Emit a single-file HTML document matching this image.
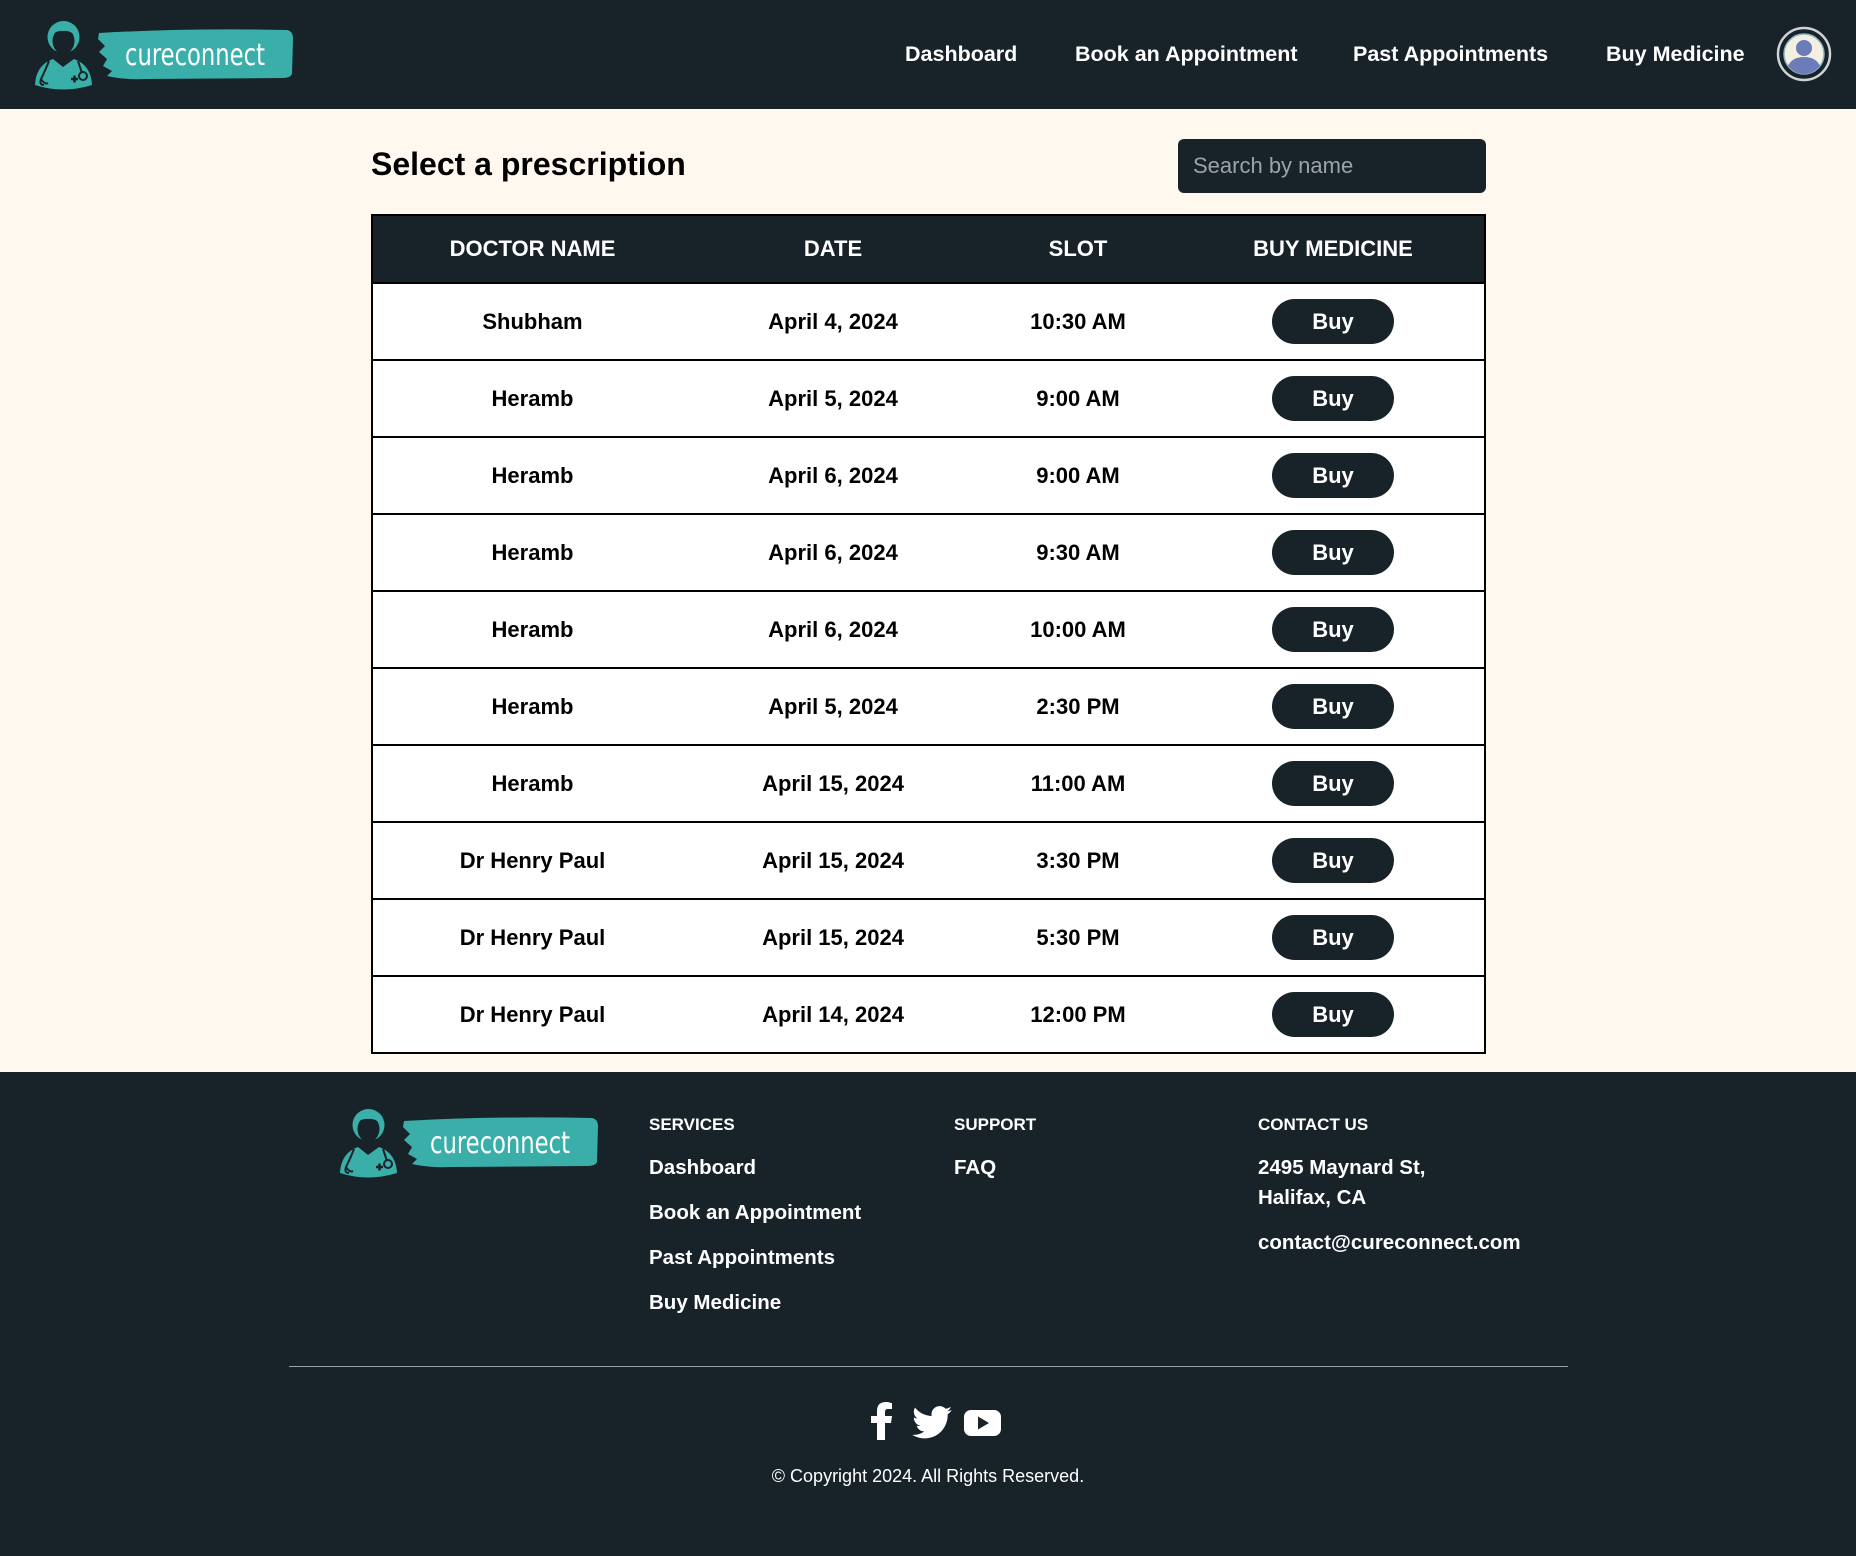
<!DOCTYPE html>
<html><head><meta charset="utf-8">
<style>
*{margin:0;padding:0;box-sizing:border-box}
body{width:1856px;height:1556px;background:#fff8ef;font-family:"Liberation Sans",sans-serif;position:relative;overflow:hidden}
.hdr{position:absolute;left:0;top:0;width:1856px;height:109px;background:#182329}
.nav a{position:absolute;top:42px;color:#fff;font-weight:bold;font-size:21.5px;text-decoration:none;white-space:nowrap}
.title{position:absolute;left:371px;top:146px;font-size:32px;font-weight:bold;color:#000}
.search{position:absolute;left:1178px;top:139px;width:308px;height:54px;background:#182329;border-radius:6px;color:#9aa3a8;font-size:22px;padding:14px 0 0 15px}
table{position:absolute;left:371px;top:214px;width:1115px;border-collapse:collapse;border:2px solid #000}
th{background:#182329;color:#fff;height:68px;font-size:22px;font-weight:bold;text-align:center}
td{height:77px;border-top:2px solid #000;background:#fff;text-align:center;font-size:22px;font-weight:bold;color:#000}
.buy{display:inline-block;width:122px;height:45px;border-radius:23px;background:#182329;color:#fff;font-weight:bold;font-size:22px;line-height:45px}
.ftr{position:absolute;left:0;top:1072px;width:1856px;height:484px;background:#182329;color:#fff}
.ftr .h{position:absolute;font-size:17px;font-weight:bold}
.ftr .l{position:absolute;font-size:20.5px;font-weight:bold;white-space:nowrap}
.hr{position:absolute;left:289px;top:294px;width:1279px;height:1px;background:#9aa0a4}
.copy{position:absolute;left:0;width:1856px;text-align:center;top:394px;font-size:18px}
</style></head><body>
<svg width="0" height="0" style="position:absolute">
<defs>
<g id="logo">
<path d="M0 66 Q1 46 18 40 L28 48 L39 40 Q56 46 57 66 Q28 75 0 66Z" fill="#3aafa9"/>
<circle cx="28.5" cy="18" r="16" fill="#3aafa9"/>
<ellipse cx="28.5" cy="22" rx="11" ry="13" fill="#182329"/>
<path d="M17 16 Q18 6 28.5 6 Q39 6 40 16 Q34 11 28.5 12 Q22 11 17 16Z" fill="#3aafa9"/>
<path d="M14 42 Q10 52 6 60 M43 42 L47 54" stroke="#182329" stroke-width="2" fill="none"/>
<path d="M6 60 Q4 66 9 66 M6 60 Q10 66 13 64" stroke="#182329" stroke-width="2" fill="none"/>
<circle cx="48" cy="57" r="4" stroke="#182329" stroke-width="2" fill="none"/>
<path d="M36 60 h7 M39.5 56.5 v7" stroke="#182329" stroke-width="2.5"/>
<path d="M64 14 Q150 9 252 11 Q258 12 258 20 L257 55 Q255 59 248 59 L110 60 Q90 61 72 57 L77 52 L68 47 L72 40 L64 33 L70 27 L63 20Z" fill="#3aafa9"/>
<text x="90" y="46" font-family="Liberation Sans Narrow, DejaVu Sans Condensed, sans-serif" font-size="30" fill="#fff" textLength="140" lengthAdjust="spacingAndGlyphs">cureconnect</text>
</g>
</defs></svg>

<div class="hdr">
<svg style="position:absolute;left:35px;top:19px" width="260" height="72" viewBox="0 0 260 72"><use href="#logo"/></svg>
<div class="nav">
<a style="left:905px">Dashboard</a>
<a style="left:1075px">Book an Appointment</a>
<a style="left:1353px">Past Appointments</a>
<a style="left:1606px">Buy Medicine</a>
</div>
<svg style="position:absolute;left:1776px;top:26px" width="56" height="56" viewBox="0 0 56 56">
<circle cx="28" cy="28" r="26" fill="none" stroke="#d0d3d6" stroke-width="2.5"/>
<circle cx="28" cy="28" r="20" fill="#f3efe2" stroke="#8fb4c2" stroke-width="1.5"/>
<circle cx="28" cy="22" r="8" fill="#6b7cb8"/>
<path d="M12 40 Q16 31 28 31 Q40 31 44 40 Q37 48 28 48 Q19 48 12 40Z" fill="#6b7cb8"/>
</svg>
</div>

<div class="title">Select a prescription</div>
<div class="search">Search by name</div>

<table>
<tr><th style="width:320px">DOCTOR NAME</th><th style="width:282px">DATE</th><th style="width:208px">SLOT</th><th>BUY MEDICINE</th></tr>
<tr><td>Shubham</td><td>April 4, 2024</td><td>10:30 AM</td><td><span class="buy">Buy</span></td></tr>
<tr><td>Heramb</td><td>April 5, 2024</td><td>9:00 AM</td><td><span class="buy">Buy</span></td></tr>
<tr><td>Heramb</td><td>April 6, 2024</td><td>9:00 AM</td><td><span class="buy">Buy</span></td></tr>
<tr><td>Heramb</td><td>April 6, 2024</td><td>9:30 AM</td><td><span class="buy">Buy</span></td></tr>
<tr><td>Heramb</td><td>April 6, 2024</td><td>10:00 AM</td><td><span class="buy">Buy</span></td></tr>
<tr><td>Heramb</td><td>April 5, 2024</td><td>2:30 PM</td><td><span class="buy">Buy</span></td></tr>
<tr><td>Heramb</td><td>April 15, 2024</td><td>11:00 AM</td><td><span class="buy">Buy</span></td></tr>
<tr><td>Dr Henry Paul</td><td>April 15, 2024</td><td>3:30 PM</td><td><span class="buy">Buy</span></td></tr>
<tr><td>Dr Henry Paul</td><td>April 15, 2024</td><td>5:30 PM</td><td><span class="buy">Buy</span></td></tr>
<tr><td>Dr Henry Paul</td><td>April 14, 2024</td><td>12:00 PM</td><td><span class="buy">Buy</span></td></tr>
</table>

<div class="ftr">
<svg style="position:absolute;left:340px;top:35px" width="260" height="72" viewBox="0 0 260 72"><use href="#logo"/></svg>
<div class="h" style="left:649px;top:43px">SERVICES</div>
<div class="h" style="left:954px;top:43px">SUPPORT</div>
<div class="h" style="left:1258px;top:43px">CONTACT US</div>
<div class="l" style="left:649px;top:84px">Dashboard</div>
<div class="l" style="left:649px;top:129px">Book an Appointment</div>
<div class="l" style="left:649px;top:174px">Past Appointments</div>
<div class="l" style="left:649px;top:219px">Buy Medicine</div>
<div class="l" style="left:954px;top:84px">FAQ</div>
<div class="l" style="left:1258px;top:84px">2495 Maynard St,</div>
<div class="l" style="left:1258px;top:114px">Halifax, CA</div>
<div class="l" style="left:1258px;top:159px">contact@cureconnect.com</div>
<div class="hr"></div>
<svg style="position:absolute;left:870px;top:330px" width="24" height="38" viewBox="0 0 24 38"><path d="M15 38V21h6l1-7h-7V10c0-2 1-3 3-3h4V1c-1 0-3-1-6-1-6 0-9 3-9 9v5H1v7h6v17z" fill="#fff"/></svg>
<svg style="position:absolute;left:912px;top:334px" width="40" height="33" viewBox="0 0 24 20"><path d="M24 2.4c-.9.4-1.8.6-2.8.8 1-.6 1.8-1.6 2.2-2.7-1 .6-2 1-3.1 1.2C19.3.7 18 .1 16.6.1c-2.7 0-4.9 2.2-4.9 4.9 0 .4 0 .8.1 1.1C7.7 5.9 4.1 4 1.7 1 1.2 1.8 1 2.6 1 3.5c0 1.7.9 3.2 2.2 4.1-.8 0-1.6-.2-2.2-.6v.1c0 2.4 1.7 4.4 3.9 4.8-.4.1-.8.2-1.300.2-.3 0-.6 0-.9-.1.6 2 2.4 3.4 4.6 3.4-1.7 1.3-3.8 2.1-6.1 2.1-.4 0-.8 0-1.2-.1 2.2 1.4 4.8 2.2 7.5 2.2 9.1 0 14-7.5 14-14v-.6c1-.7 1.8-1.6 2.5-2.600z" fill="#fff"/></svg>
<svg style="position:absolute;left:964px;top:338px" width="37" height="26" viewBox="0 0 37 26"><rect width="37" height="26" rx="7" fill="#fff"/><path d="M14 6.5v13l11-6.5z" fill="#182329"/></svg>
<div class="copy">© Copyright 2024. All Rights Reserved.</div>
</div>
</body></html>
